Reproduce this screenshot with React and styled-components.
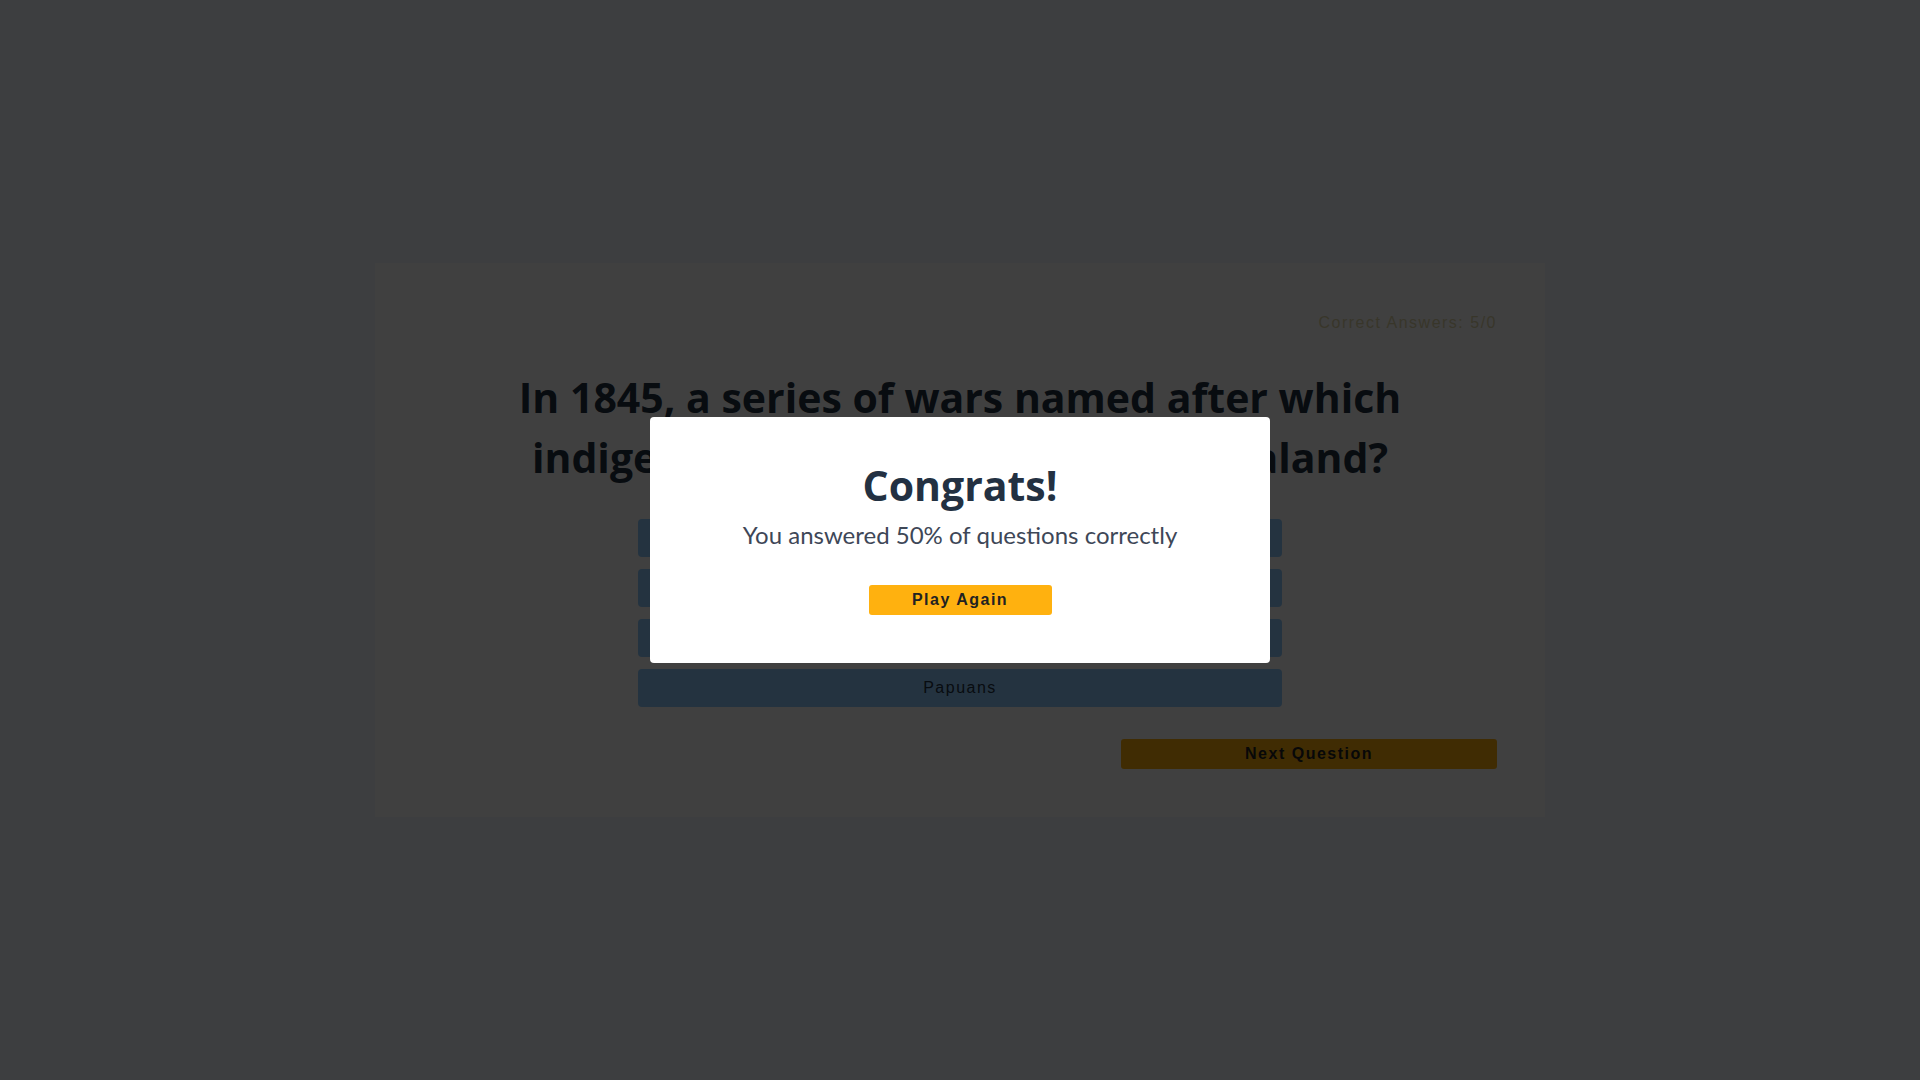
import React from 'react';
import styled, { createGlobalStyle } from 'styled-components';

const GlobalStyle = createGlobalStyle`
	* {
		box-sizing: border-box;
	}
	body {
		margin: 0;
		background: #f4f8fe;
		font-family: 'Lato', 'Noto Sans', sans-serif;
		color: #233142;
	}
`;

const answers = ['Aboriginals', 'Maori', 'Polynesians', 'Papuans'];

function App() {
	return (
		<>
			<GlobalStyle />
			<Page>
				<Card>
					<Score>Correct Answers: 5/0</Score>
					<Question>
						In 1845, a series of wars named after which indigenous people began in New Zealand?
					</Question>
					<Answers>
						{answers.map((a) => (
							<Answer key={a}>{a}</Answer>
						))}
					</Answers>
					<Footer>
						<NextButton>Next Question</NextButton>
					</Footer>
				</Card>
			</Page>
			<Overlay>
				<Modal>
					<ModalTitle>Congrats!</ModalTitle>
					<ModalText>You answered 50% of questions correctly</ModalText>
					<PlayButton>Play Again</PlayButton>
				</Modal>
			</Overlay>
		</>
	);
}

export default App;

const Page = styled.main`
	min-height: 100vh;
	display: flex;
	align-items: center;
	justify-content: center;
`;

const Card = styled.section`
	width: 1170px;
	padding: 48px;
	background: #ffffff;
	display: flex;
	flex-direction: column;
	gap: 32px;
`;

const Score = styled.p`
	margin: 0;
	text-align: right;
	font-family: 'Liberation Sans', Arial, sans-serif;
	font-size: 16px;
	line-height: 24px;
	letter-spacing: 1.5px;
	color: #e0d6a8;
`;

const Question = styled.h2`
	margin: 0 auto;
	max-width: 960px;
	text-align: center;
	font-family: 'Open Sans', 'Noto Sans', sans-serif;
	font-size: 41px;
	line-height: 60px;
	font-weight: 700;
	color: #233142;
`;

const Answers = styled.div`
	width: 60%;
	margin: 0 auto;
	display: flex;
	flex-direction: column;
	gap: 12px;
`;

const Answer = styled.button`
	height: 38px;
	border: none;
	border-radius: 4px;
	background: #8ecbff;
	color: #233142;
	font-family: 'Liberation Sans', Arial, sans-serif;
	font-size: 16px;
	letter-spacing: 1.5px;
	cursor: pointer;
`;

const Footer = styled.div`
	display: flex;
	justify-content: flex-end;
`;

const Button = styled.button`
	height: 30px;
	border: none;
	border-radius: 3px;
	background: #ffb10f;
	color: #222222;
	font-family: 'Liberation Sans', Arial, sans-serif;
	font-size: 16px;
	font-weight: 700;
	letter-spacing: 1.5px;
	cursor: pointer;
`;

const NextButton = styled(Button)`
	width: 35%;
`;

const PlayButton = styled(Button)`
	width: 183px;
	margin-top: 32px;
`;

const Overlay = styled.div`
	position: fixed;
	inset: 0;
	background: rgba(0, 0, 0, 0.75);
	display: flex;
	align-items: center;
	justify-content: center;
`;

const Modal = styled.div`
	width: 620px;
	padding: 48px 40px;
	background: #ffffff;
	border-radius: 4px;
	display: flex;
	flex-direction: column;
	align-items: center;
	text-align: center;
`;

const ModalTitle = styled.h2`
	margin: 0;
	font-family: 'Open Sans', 'Noto Sans', sans-serif;
	font-size: 41px;
	line-height: 40px;
	font-weight: 700;
	color: #233142;
`;

const ModalText = styled.p`
	margin: 12px 0 0;
	font-size: 24px;
	line-height: 36px;
	color: #3e4757;
`;
